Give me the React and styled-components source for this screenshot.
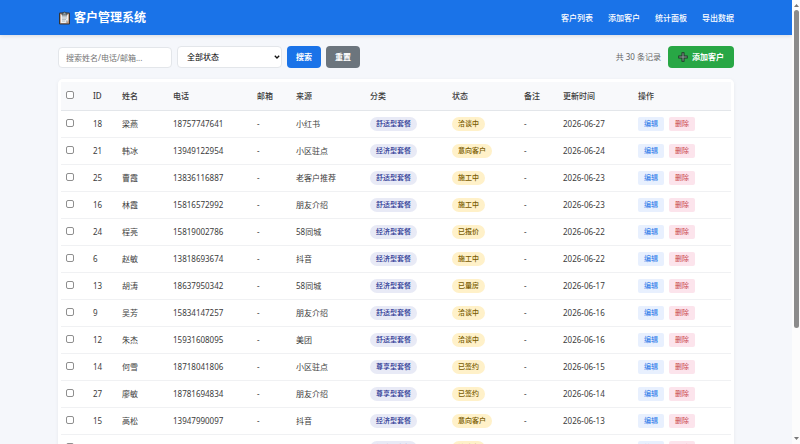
import React, { useState } from 'react';
import styled, { createGlobalStyle, ThemeProvider } from 'styled-components';

const theme = {
  primary: '#1a73e8',
  success: '#28a745',
  secondary: '#6c757d',
  border: '#e3e6ea',
  text: '#3c3c3c',
  maxWidth: 676
};

const GlobalStyle = createGlobalStyle`
  * {
    box-sizing: border-box;
  }

  body {
    margin: 0;
    background: #f5f7fb;
    color: ${theme.text};
    font-family: 'Noto Sans', 'Noto Sans CJK SC', sans-serif;
    font-size: 8px;
    line-height: 12px;
  }

  button, input, select {
    font: inherit;
  }
`;

const Shell = styled.div`
  display: flex;
  height: 100vh;
  overflow: hidden;
`;

const Page = styled.div`
  flex: 1;
  min-width: 0;
  overflow-y: auto;
  scrollbar-width: none;
`;

const Container = styled.div`
  width: 100%;
  max-width: ${props => props.theme.maxWidth}px;
  margin: 0 auto;
`;

const Header = styled.header`
  background: ${props => props.theme.primary};
  color: white;
  box-shadow: 0 1px 4px rgba(0, 0, 0, 0.12);
`;

const HeaderInner = styled(Container)`
  display: flex;
  align-items: center;
  justify-content: space-between;
  height: 35px;
`;

const Title = styled.h1`
  display: flex;
  align-items: center;
  gap: 3px;
  margin: 0;
  font-size: 12px;
  line-height: 16px;
`;

const Nav = styled.nav`
  display: flex;
  gap: 15px;
`;

const NavLink = styled.a`
  color: white;
  font-weight: 500;
  text-decoration: none;
`;

const Toolbar = styled(Container)`
  display: flex;
  align-items: center;
  justify-content: space-between;
  padding: 11px 0;
`;

const Group = styled.div`
  display: flex;
  align-items: center;
  gap: 5px;
`;

const SearchInput = styled.input`
  width: 114px;
  height: 21px;
  padding: 0 7px;
  background: white;
  border: 1px solid ${props => props.theme.border};
  border-radius: 4px;

  &::placeholder {
    color: #757575;
  }
`;

const SelectWrap = styled.div`
  display: grid;
  align-items: center;
  width: 105px;

  > * {
    grid-area: 1 / 1;
  }

  svg {
    justify-self: end;
    margin-right: 2px;
    pointer-events: none;
  }
`;

const StatusSelect = styled.select`
  appearance: none;
  width: 100%;
  height: 22px;
  padding: 0 9px;
  background: white;
  color: black;
  border: 1px solid ${props => props.theme.border};
  border-radius: 4px;
`;

const Button = styled.button`
  display: flex;
  align-items: center;
  gap: 4px;
  height: 22px;
  padding: 0 ${props => (props.$wide ? 10 : 9)}px;
  background: ${props => props.theme[props.$color]};
  color: white;
  font-weight: 600;
  border: 0;
  border-radius: 4px;
`;

const Total = styled.span`
  margin-right: 2px;
  color: #666;
`;

const Card = styled(Container)`
  padding: 3px;
  background: white;
  border-radius: 5px;
  box-shadow: 0 1px 4px rgba(0, 0, 0, 0.06);
`;

const Table = styled.table`
  width: 100%;
  table-layout: fixed;
  border-collapse: collapse;
`;

const Th = styled.th`
  height: 28px;
  padding: 0 5px;
  background: #f8f9fb;
  border-bottom: 1px solid ${props => props.theme.border};
  font-weight: 500;
  text-align: left;
`;

const Td = styled.td`
  height: 27px;
  padding: 0 5px;
  border-bottom: 1px solid #f0f1f3;
  white-space: nowrap;
`;

const Checkbox = styled.input`
  appearance: none;
  display: block;
  width: 8px;
  height: 8px;
  margin: 0 0 2px;
  background: white;
  border: 1px solid #8f8f8f;
  border-radius: 2px;

  &:checked {
    background: ${props => props.theme.primary};
    border-color: ${props => props.theme.primary};
  }
`;

const Badge = styled.span`
  display: inline-block;
  padding: 1px 6px;
  background: ${props => (props.$status ? '#fff1c9' : '#e8eaf6')};
  color: ${props => (props.$status ? '#7a5c00' : '#283593')};
  border-radius: 8px;
  font-size: 7px;
  font-weight: 500;
`;

const Actions = styled.div`
  display: flex;
  gap: 5px;
`;

const RowButton = styled.button`
  height: 14px;
  padding: 0 6px;
  background: ${props => (props.$danger ? '#fce4ec' : '#e8f0fe')};
  color: ${props => (props.$danger ? '#c9424a' : props.theme.primary)};
  border: 0;
  border-radius: 2px;
  font-size: 7px;
`;

const ScrollTrack = styled.div`
  display: flex;
  flex-direction: column;
  align-items: center;
  justify-content: space-between;
  width: 8px;
  padding: 4px 0;
  background: #fcfcfc;
`;

const ScrollThumb = styled.div`
  flex: 0 0 73%;
  width: 5px;
  margin-top: 3px;
  margin-bottom: auto;
  background: #8b8b8b;
  border-radius: 3px;
`;

const ClipboardIcon = () => (
  <svg width="13" height="14" viewBox="0 0 13 14" aria-hidden="true">
    <rect x="1" y="1.5" width="11" height="12" rx="1.2" fill="#343434" />
    <rect x="2" y="2.5" width="9" height="10" rx="0.6" fill="#c19a83" />
    <path d="M2.8 3.2h7.4v6.3l-2.3 2.4H2.8z" fill="#eef1f2" />
    <path d="M10.2 9.5H7.9v2.4z" fill="#aab4ba" />
    <path d="M4 5.4h5M4 7h5M4 8.6h4M4 10.1h3" stroke="#8d999f" strokeWidth="0.6" />
    <path d="M4 2.2h1.4a1.1 1.1 0 0 1 2.2 0H9v1.9H4z" fill="#90a4ae" stroke="#343434" strokeWidth="0.7" />
  </svg>
);

const PlusIcon = () => (
  <svg width="10" height="10" viewBox="0 0 10 10" aria-hidden="true">
    <path d="M5 0.3v9.4M0.3 5h9.4" stroke="#22332a" strokeWidth="3" />
    <path d="M5 1.2v7.6M1.2 5h7.6" stroke="#8fa39a" strokeWidth="1" />
  </svg>
);

const ChevronIcon = () => (
  <svg width="6" height="6" viewBox="0 0 6 6" aria-hidden="true">
    <path d="M0.8 1.7L3 4l2.2-2.3" fill="none" stroke="#111" strokeWidth="1.3" />
  </svg>
);

const ArrowIcon = ({ down }) => (
  <svg width="5" height="3" viewBox="0 0 5 3" aria-hidden="true">
    <path d={down ? 'M0 0h5L2.5 3z' : 'M0 3h5L2.5 0z'} fill="#777" />
  </svg>
);

const links = ['客户列表', '添加客户', '统计面板', '导出数据'];

const columns = [
  { name: '', width: 27 },
  { name: 'ID', width: 29 },
  { name: '姓名', width: 51 },
  { name: '电话', width: 84 },
  { name: '邮箱', width: 39 },
  { name: '来源', width: 74 },
  { name: '分类', width: 82 },
  { name: '状态', width: 72 },
  { name: '备注', width: 39 },
  { name: '更新时间', width: 75 },
  { name: '操作', width: 98 }
];

const customers = [
  [18, '梁燕', '18757747641', '小红书', '舒适型套餐', '洽谈中', '2026-06-27'],
  [21, '韩冰', '13949122954', '小区驻点', '经济型套餐', '意向客户', '2026-06-24'],
  [25, '曹霞', '13836116887', '老客户推荐', '舒适型套餐', '施工中', '2026-06-23'],
  [16, '林霞', '15816572992', '朋友介绍', '舒适型套餐', '施工中', '2026-06-23'],
  [24, '程亮', '15819002786', '58同城', '经济型套餐', '已报价', '2026-06-22'],
  [6, '赵敏', '13818693674', '抖音', '经济型套餐', '施工中', '2026-06-22'],
  [13, '胡涛', '18637950342', '58同城', '经济型套餐', '已量房', '2026-06-17'],
  [9, '吴芳', '15834147257', '朋友介绍', '舒适型套餐', '洽谈中', '2026-06-16'],
  [12, '朱杰', '15931608095', '美团', '舒适型套餐', '洽谈中', '2026-06-16'],
  [14, '何雪', '18718041806', '小区驻点', '尊享型套餐', '已签约', '2026-06-15'],
  [27, '廖敏', '18781694834', '朋友介绍', '尊享型套餐', '已签约', '2026-06-14'],
  [15, '高松', '13947990097', '抖音', '经济型套餐', '意向客户', '2026-06-13'],
  [30, '肖雪梅', '13812093348', '朋友介绍', '经济型套餐', '洽谈中', '2026-06-12']
];

const App = () => {
  const [selected, setSelected] = useState([]);
  const allSelected = selected.length === customers.length;

  function toggle(id) {
    setSelected(
      selected.includes(id) ? selected.filter(i => i !== id) : [...selected, id]
    );
  }

  function toggleAll() {
    setSelected(allSelected ? [] : customers.map(([id]) => id));
  }

  return (
    <ThemeProvider theme={theme}>
      <GlobalStyle />
      <Shell>
        <Page>
          <Header>
            <HeaderInner>
              <Title>
                <ClipboardIcon /> 客户管理系统
              </Title>
              <Nav>
                {links.map(name => (
                  <NavLink key={name} href="#">
                    {name}
                  </NavLink>
                ))}
              </Nav>
            </HeaderInner>
          </Header>
          <Toolbar>
            <Group>
              <SearchInput
                type="text"
                aria-label="搜索"
                placeholder="搜索姓名/电话/邮箱..."
              />
              <SelectWrap>
                <StatusSelect aria-label="状态">
                  <option>全部状态</option>
                  <option>洽谈中</option>
                  <option>意向客户</option>
                  <option>施工中</option>
                  <option>已签约</option>
                </StatusSelect>
                <ChevronIcon />
              </SelectWrap>
              <Button $color="primary">搜索</Button>
              <Button $color="secondary">重置</Button>
            </Group>
            <Group>
              <Total>共 30 条记录</Total>
              <Button $color="success" $wide>
                <PlusIcon /> 添加客户
              </Button>
            </Group>
          </Toolbar>
          <Card>
            <Table>
              <colgroup>
                {columns.map(({ name, width }) => (
                  <col key={name} width={width} />
                ))}
              </colgroup>
              <thead>
                <tr>
                  {columns.map(({ name }) => (
                    <Th key={name}>
                      {name || (
                        <Checkbox
                          type="checkbox"
                          aria-label="全选"
                          checked={allSelected}
                          onChange={toggleAll}
                        />
                      )}
                    </Th>
                  ))}
                </tr>
              </thead>
              <tbody>
                {customers.map(([id, name, phone, source, plan, status, date]) => (
                  <tr key={id}>
                    <Td>
                      <Checkbox
                        type="checkbox"
                        aria-label={name}
                        checked={selected.includes(id)}
                        onChange={() => toggle(id)}
                      />
                    </Td>
                    <Td>{id}</Td>
                    <Td>{name}</Td>
                    <Td>{phone}</Td>
                    <Td>-</Td>
                    <Td>{source}</Td>
                    <Td>
                      <Badge>{plan}</Badge>
                    </Td>
                    <Td>
                      <Badge $status>{status}</Badge>
                    </Td>
                    <Td>-</Td>
                    <Td>{date}</Td>
                    <Td>
                      <Actions>
                        <RowButton>编辑</RowButton>
                        <RowButton $danger>删除</RowButton>
                      </Actions>
                    </Td>
                  </tr>
                ))}
              </tbody>
            </Table>
          </Card>
        </Page>
        <ScrollTrack>
          <ArrowIcon />
          <ScrollThumb />
          <ArrowIcon down />
        </ScrollTrack>
      </Shell>
    </ThemeProvider>
  );
};

export default App;
